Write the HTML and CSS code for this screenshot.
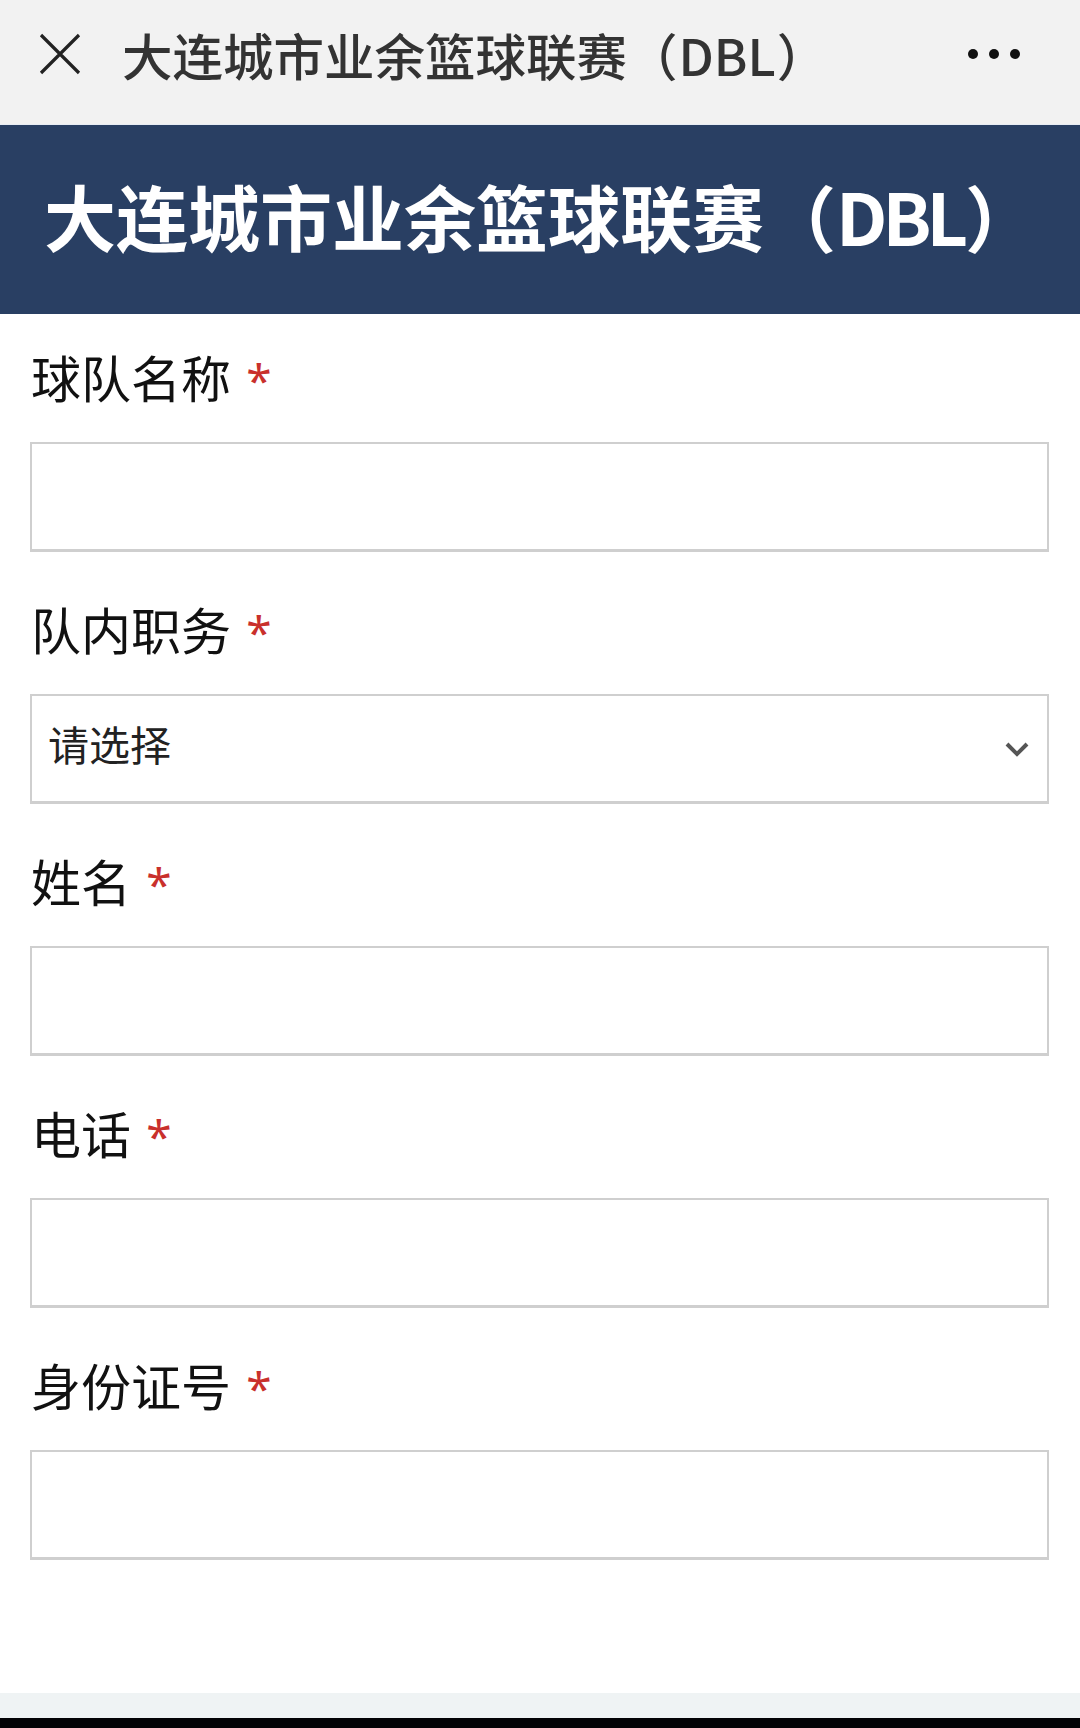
FILE: index.html
```html
<!DOCTYPE html>
<html lang="zh-CN">
<head>
<meta charset="utf-8">
<title>大连城市业余篮球联赛（DBL）</title>
<link rel="stylesheet" href="styles.css">
</head>
<body>
<div class="page">
  <header class="navbar">
    <svg class="close-icon" viewBox="0 0 42 42" width="42" height="42" aria-hidden="true">
      <path d="M2 2 L40 40 M40 2 L2 40" stroke="#222" stroke-width="3.2" stroke-linecap="butt" fill="none"/>
    </svg>
    <div class="nav-title">大连城市业余篮球联赛（<span class="nav-abbr">DBL</span>）</div>
    <div class="nav-more" aria-label="更多">
      <span class="dot"></span><span class="dot"></span><span class="dot"></span>
    </div>
  </header>

  <div class="banner">
    <h1 class="banner-title">大连城市业余篮球联赛（<span class="banner-abbr">DBL</span>）</h1>
  </div>

  <main class="form">
    <div class="field">
      <label class="label">球队名称 <span class="req">*</span></label>
      <input class="input" type="text">
    </div>
    <div class="field">
      <label class="label">队内职务 <span class="req">*</span></label>
      <div class="select-wrap">
        <select class="input select">
          <option>请选择</option>
        </select>
        <svg class="chevron" viewBox="0 0 24 16" width="24" height="16" aria-hidden="true">
          <path d="M2 2 L12 12 L22 2" stroke="#555" stroke-width="4" fill="none" stroke-linejoin="miter"/>
        </svg>
      </div>
    </div>
    <div class="field">
      <label class="label">姓名 <span class="req">*</span></label>
      <input class="input" type="text">
    </div>
    <div class="field">
      <label class="label">电话 <span class="req">*</span></label>
      <input class="input" type="text">
    </div>
    <div class="field">
      <label class="label">身份证号 <span class="req">*</span></label>
      <input class="input" type="text">
    </div>
  </main>

  <div class="bottom-band"></div>
  <div class="screen-edge"></div>
</div>
</body>
</html>
```

FILE: styles.css
```css
* {
  box-sizing: border-box;
}

html, body {
  margin: 0;
  padding: 0;
  background: #ffffff;
}

body {
  font-family: "Noto Sans CJK SC", "Noto Sans", sans-serif;
}

.page {
  width: 1080px;
  height: 1728px;
  display: flex;
  flex-direction: column;
  overflow: hidden;
  background: #ffffff;
}

.navbar {
  height: 125px;
  flex: none;
  background: #f2f2f2;
  border-bottom: 1px solid #e8edf4;
  display: flex;
  align-items: center;
  padding: 0 0 16px 39px;
}

.close-icon {
  flex: none;
  display: block;
}

.nav-title {
  margin-left: 41px;
  font-size: 50.5px;
  line-height: 60px;
  color: #333333;
  font-weight: 500;
  white-space: nowrap;
  flex: 1;
}

.nav-abbr {
  margin: 0 1px;
}

.nav-more {
  display: flex;
  gap: 11px;
  margin-right: 60px;
  flex: none;
}

.dot {
  width: 10px;
  height: 10px;
  border-radius: 50%;
  background: #111111;
  display: block;
}

.banner {
  height: 189px;
  flex: none;
  background: #293f63;
  display: flex;
  align-items: center;
  padding: 0 0 10px 44px;
}

.banner-title {
  margin: 0;
  font-size: 72px;
  line-height: 90px;
  font-weight: 700;
  color: #ffffff;
  white-space: nowrap;
}

.banner-abbr {
  letter-spacing: -5px;
  margin-right: 2px;
}

.form {
  flex: 1;
  padding: 2px 31px 0 30px;
}

.field {
  display: flex;
  flex-direction: column;
  margin-bottom: 16px;
}

.label {
  display: block;
  height: 120px;
  font-size: 50px;
  line-height: 120px;
  margin-bottom: 6px;
  margin-left: 1px;
  color: #111111;
  white-space: nowrap;
  overflow: hidden;
}

.req {
  color: #c9302c;
  font-size: 46px;
  line-height: 1;
  font-family: "Noto Sans", "Noto Sans CJK SC", sans-serif;
  margin-left: 4px;
}

.input {
  display: block;
  width: 100%;
  height: 110px;
  margin: 0;
  border: 2px solid #cfcfcf;
  border-bottom-width: 3px;
  border-radius: 0;
  background: #ffffff;
  outline: none;
  font-family: "Noto Sans CJK SC", "Noto Sans", sans-serif;
  font-size: 41px;
  color: #222222;
  padding: 0 18px;
}

.select-wrap {
  position: relative;
}

.select {
  appearance: none;
  -webkit-appearance: none;
  padding-left: 16px;
  padding-top: 0;
  padding-bottom: 12px;
}

.chevron {
  position: absolute;
  right: 20px;
  top: 48px;
  pointer-events: none;
}

.bottom-band {
  height: 25px;
  flex: none;
  background: #eff3f4;
}

.screen-edge {
  height: 10px;
  flex: none;
  background: #030306;
}
```
